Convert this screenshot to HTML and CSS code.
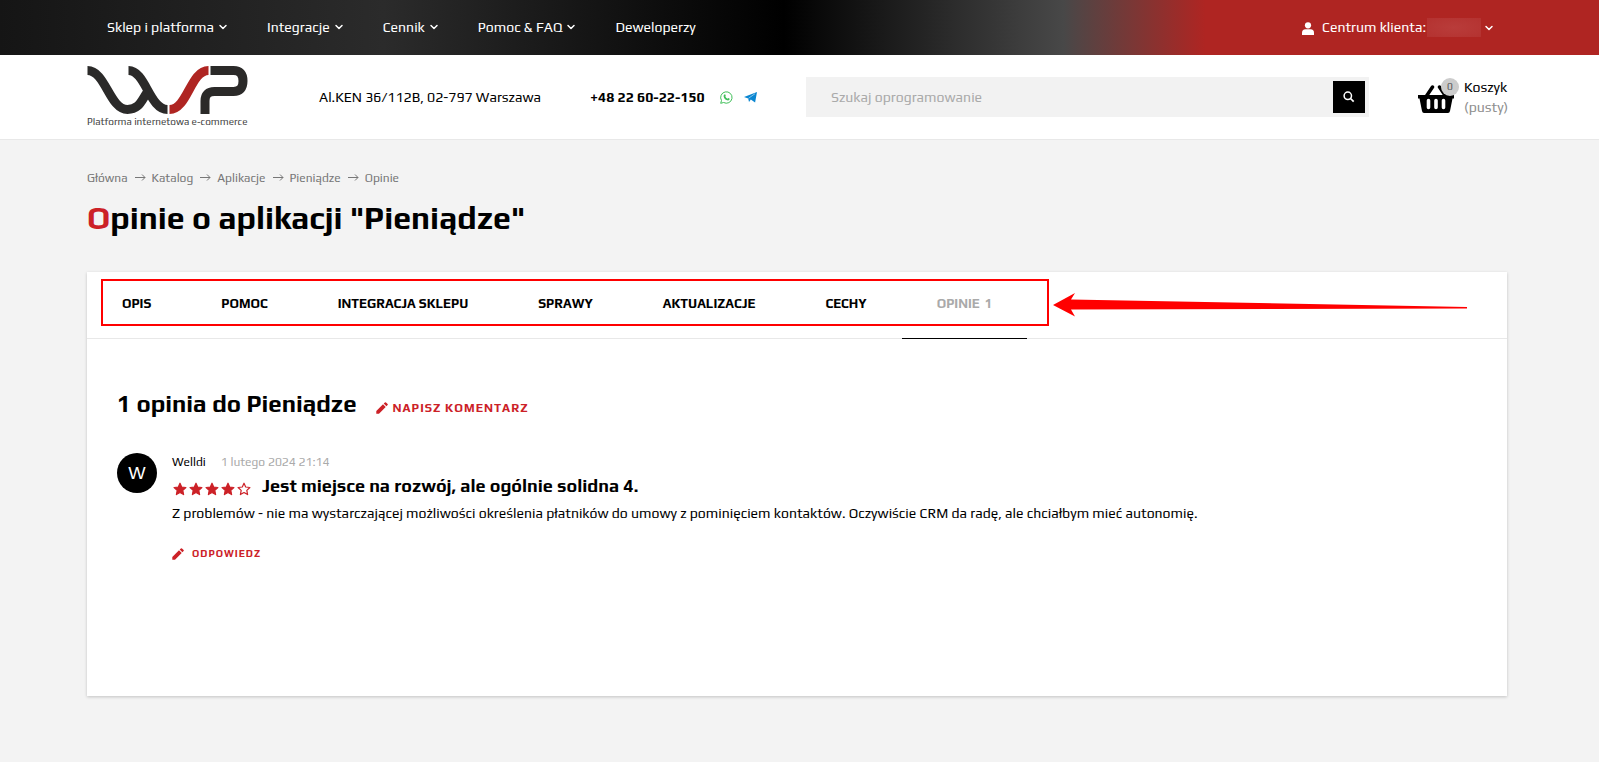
FILE: index.html
```
<!DOCTYPE html>
<html lang="pl">
<head>
<meta charset="utf-8">
<title>Opinie o aplikacji "Pieniądze"</title>
<link rel="stylesheet" href="styles.css">
</head>
<body>
<svg class="sprite" aria-hidden="true">
  <symbol id="chevron" viewBox="0 0 10 10"><path d="M2 3.500 5 6.500 8 3.500" fill="none" stroke="currentColor" stroke-width="1.500" stroke-linecap="round" stroke-linejoin="round"/></symbol>
  <symbol id="pencil" viewBox="0 0 12 12"><path d="M.3 9 7 2.300 9.700 5 3 11.700H.3zM7.700 1.600 8.900.4q.6-.5 1.100 0l1.600 1.600q.5.5 0 1.100L10.400 4.300z" fill="currentColor"/></symbol>
  <symbol id="star" viewBox="0 0 14 14"><path d="M7 1.200 8.700 5 12.900 5.500 9.800 8.400 10.600 12.600 7 10.500 3.400 12.600 4.200 8.400 1.100 5.500 5.300 5z" stroke="currentColor" stroke-width="1.200" stroke-linejoin="round"/></symbol>
  <symbol id="arrow" viewBox="0 0 12 10"><path d="M1 4.500H11M8 1.500 11 4.500 8 7.500" fill="none" stroke="currentColor"/></symbol>
</svg>
<header>
  <div class="topbar">
    <nav class="menu" aria-label="Menu główne">
      <a href="#">Sklep i platforma <svg class="chev"><use href="#chevron"/></svg></a>
      <a href="#">Integracje <svg class="chev"><use href="#chevron"/></svg></a>
      <a href="#">Cennik <svg class="chev"><use href="#chevron"/></svg></a>
      <a href="#">Pomoc &amp; FAQ <svg class="chev"><use href="#chevron"/></svg></a>
      <a href="#">Deweloperzy</a>
    </nav>
    <a class="account" href="#">
      <svg class="user" viewBox="0 0 12 13"><circle cx="6" cy="3.300" r="3.100" fill="#fff"/><path d="M0 13v-2Q0 7.300 3.500 7.300h5Q12 7.300 12 11v2z" fill="#fff"/></svg>
      <span>Centrum klienta:</span><span class="hidden-name"></span>
      <svg class="chev"><use href="#chevron"/></svg>
    </a>
  </div>
  <div class="mainbar">
    <a class="brand" href="#">
      <svg class="logo" viewBox="0 0 160 48" fill="none" stroke="#2b2a29" stroke-width="9">
        <path d="M0 4.500C18 4.500 22 43.500 40 43.500C52 43.500 54 34 60 26"/>
        <path d="M41 4.500C58 4.500 62 43.500 80 43.500"/>
        <path d="M82 43.500C100 43.500 103 4.500 121 4.500" stroke="#af2522"/>
        <path d="M123 4.500H146Q155.500 4.500 155.500 15T146 25.500H127Q117.500 25.500 117.500 35V48"/>
      </svg>
      <span>Platforma internetowa e-commerce</span>
    </a>
    <address>Al.KEN 36/112B, 02-797 Warszawa</address>
    <div class="phone">
      <a href="#">+48 22 60-22-150</a>
      <a href="#" aria-label="WhatsApp"><svg class="social" viewBox="0 0 13 13"><path d="M.7 12.300 1.500 9.500A5.700 5.700 0 1 1 3.600 11.500z" fill="none" stroke="#3fbf58"/><path d="M4.300 3.400 5.200 3.300 5.800 4.900 5.300 5.600Q6 7.200 7.500 7.700L8.200 7 9.700 7.700Q9.700 9.300 8 9.400 4.300 8.900 3.600 5.200 3.600 4 4.300 3.400z" fill="#3fbf58"/></svg></a>
      <a href="#" aria-label="Telegram"><svg class="social" viewBox="0 0 13 13"><path d="M13 1 11.100 11.500 6.800 8.500 5 11 4.200 7.500 0 6z" fill="#0a86d1"/><path d="M4.500 7.300 11 2.700" fill="none" stroke="#fff" stroke-width=".5"/></svg></a>
    </div>
    <form class="search">
      <input type="search" placeholder="Szukaj oprogramowanie" aria-label="Szukaj oprogramowanie">
      <button type="button" aria-label="Szukaj"><svg viewBox="0 0 12 12"><circle cx="4.800" cy="4.800" r="3.700" fill="none" stroke="#fff" stroke-width="1.500"/><path d="M7.500 7.500 10.700 10.700" stroke="#fff" stroke-width="1.700"/></svg></button>
    </form>
    <a class="cart" href="#">
      <span class="basket"><svg viewBox="0 0 36 28"><path d="M0 10h36v3.500h-1.500L32 26q-.4 2-2 2H6q-1.600 0-2-2L1.500 13.500H0z"/><path d="M8.500 11 14.500 2M27.500 11 21.500 2" stroke="#000" stroke-width="3.500" stroke-linecap="round"/><path d="M10.500 15.500v7M18 15.500v7M25.500 15.500v7" stroke="#fff" stroke-width="3.600" stroke-linecap="round"/></svg><span class="count">0</span></span>
      <span class="cart-text">Koszyk<small>(pusty)</small></span>
    </a>
  </div>
</header>
<main>
  <nav class="crumbs" aria-label="Ścieżka">
    <a href="#">Główna</a><svg><use href="#arrow"/></svg><a href="#">Katalog</a><svg><use href="#arrow"/></svg><a href="#">Aplikacje</a><svg><use href="#arrow"/></svg><a href="#">Pieniądze</a><svg><use href="#arrow"/></svg><span>Opinie</span>
  </nav>
  <h1>Opinie o aplikacji "Pieniądze"</h1>
  <section class="card">
    <nav class="tabs" aria-label="Aplikacja">
      <a href="#">OPIS</a><a href="#">POMOC</a><a href="#">INTEGRACJA SKLEPU</a><a href="#">SPRAWY</a><a href="#">AKTUALIZACJE</a><a href="#">CECHY</a><a class="active" href="#" aria-current="page">OPINIE <span>1</span></a>
      <div class="marker"><svg viewBox="0 0 416 26"><path d="M0 12 22 0 18 6.500 414 14V15.500L18 16.500 22 23.500z" fill="#f00"/></svg></div>
    </nav>
    <div class="reviews">
      <div class="heading">
        <h2>1 opinia do Pieniądze</h2>
        <button class="write"><svg><use href="#pencil"/></svg>NAPISZ KOMENTARZ</button>
      </div>
      <article>
        <div class="avatar">W</div>
        <div class="body">
          <div class="meta"><span>Welldi</span><time>1 lutego 2024 21:14</time></div>
          <div class="rating">
            <div class="stars" role="img" aria-label="4 z 5"><svg><use href="#star"/></svg><svg><use href="#star"/></svg><svg><use href="#star"/></svg><svg><use href="#star"/></svg><svg class="empty"><use href="#star"/></svg></div>
            <h3>Jest miejsce na rozwój, ale ogólnie solidna 4.</h3>
          </div>
          <p>Z problemów - nie ma wystarczającej możliwości określenia płatników do umowy z pominięciem kontaktów. Oczywiście CRM da radę, ale chciałbym mieć autonomię.</p>
          <button class="reply"><svg><use href="#pencil"/></svg>ODPOWIEDZ</button>
        </div>
      </article>
    </div>
  </section>
</main>
</body>
</html>
```
FILE: styles.css
```
* { box-sizing: border-box; }
body { margin: 0; background: #f3f3f3; color: #000; font: 14px/20px Play, "Noto Sans", sans-serif; }
a { color: inherit; text-decoration: none; }
button { border: 0; padding: 0; background: none; font: inherit; cursor: pointer; }
svg { display: block; flex: none; }
.sprite { position: absolute; width: 0; height: 0; }
.topbar { height: 55px; padding: 0 105px 1px 107px; display: flex; align-items: center; justify-content: space-between; color: #fff; background: linear-gradient(90deg, #151515 0, #2b2b2b 24%, #000 49%, #484848 66.5%, #af2522 75.4%); }
.menu { display: flex; gap: 39px; }
.menu a, .account { display: flex; align-items: center; gap: 4px; }
.chev { width: 10px; height: 10px; }
.user { width: 12px; height: 13px; margin: 2px 4px 0 0; }
.hidden-name { width: 54px; height: 19px; margin-left: -3px; background: radial-gradient(#b93c3a, #b43230); }
.account .chev { margin: 2px 0 0 -1px; }
.mainbar { height: 85px; padding: 0 92px 0 87px; display: flex; align-items: center; background: #fff; border-bottom: 1px solid #e8e8e8; }
.brand { width: 161px; font-size: 10px; line-height: 14px; color: #444; white-space: nowrap; }
.logo { width: 161px; height: 48px; margin-bottom: 1px; }
address { margin-left: 71px; width: 271px; font-style: normal; }
.phone { display: flex; align-items: center; font-weight: 700; width: 216px; }
.phone a:first-child { width: 130px; white-space: nowrap; }
.phone a + a { margin-right: 11px; }
.social { width: 13px; height: 13px; }
.search { flex: 1; height: 40px; padding: 4px; display: flex; background: #f2f2f2; }
.search input { flex: 1; min-width: 0; border: 0; padding: 0 21px; background: none; font: inherit; outline: 0; }
.search input::placeholder { color: #aaa; }
.search button { width: 32px; height: 32px; background: #000; display: grid; place-items: center; }
.search button svg { width: 12px; height: 12px; }
.cart { width: 138px; padding-left: 49px; display: flex; align-items: center; gap: 10px; }
.basket { position: relative; padding-top: 3px; }
.basket svg { width: 36px; height: 28px; }
.count { position: absolute; right: -5px; top: -4px; width: 18px; height: 18px; border-radius: 50%; background: #ccc; color: #555; font-size: 10px; line-height: 18px; text-align: center; }
.cart-text small { display: block; font-size: 14px; color: #8f8f8f; }
main { padding: 28px 92px 65px 87px; }
.crumbs { display: flex; align-items: center; font-size: 12px; color: #777; }
.crumbs svg { width: 12px; height: 10px; margin: 0 6px; }
h1 { margin: 10px 0 34px; font-size: 32px; line-height: 40px; }
h1::first-letter { color: #cc2127; }
.card { min-height: 424px; background: #fff; box-shadow: 0 1px 3px #0003; }
.tabs { position: relative; display: flex; height: 67px; border-bottom: 1px solid #e8e8e8; font-size: 13px; font-weight: 700; line-height: 64px; }
.tabs a { padding: 0 35px; white-space: nowrap; }
.tabs .active { color: #aaa; border-bottom: 1px solid #000; height: 67px; }
.active span { margin-left: 2px; }
.marker { position: absolute; left: 14px; top: 7px; width: 948px; height: 47px; border: 2px solid #f00; pointer-events: none; }
.marker svg { position: absolute; left: 950px; top: 12px; width: 416px; height: 26px; }
.reviews { padding: 47px 30px; }
.heading { display: flex; align-items: center; gap: 19px; }
h2 { margin: 0; font-size: 24px; line-height: 36px; }
.write, .reply { display: flex; align-items: center; color: #cc2127; font-weight: 700; letter-spacing: 1px; font-size: 12px; gap: 5px; }
.write { padding-top: 7px; }
.write svg, .reply svg { width: 12px; height: 12px; }
article { display: flex; gap: 15px; margin-top: 31px; }
.avatar { width: 40px; height: 40px; border-radius: 50%; background: #000; color: #fff; font-size: 18px; line-height: 40px; text-align: center; }
.meta { display: flex; gap: 15px; font-size: 12px; line-height: 18px; }
time { color: #aaa; }
.rating { display: flex; align-items: center; gap: 11px; }
.stars { display: flex; gap: 2px; color: #cc2127; fill: currentColor; padding: 5px 0 0 1px; }
.stars svg { width: 14px; height: 14px; }
.empty { fill: none; }
h3 { margin: 0; font-size: 18px; line-height: 30px; }
p { margin: 2px 0 21px; }
.reply { font-size: 10px; gap: 8px; }
```
